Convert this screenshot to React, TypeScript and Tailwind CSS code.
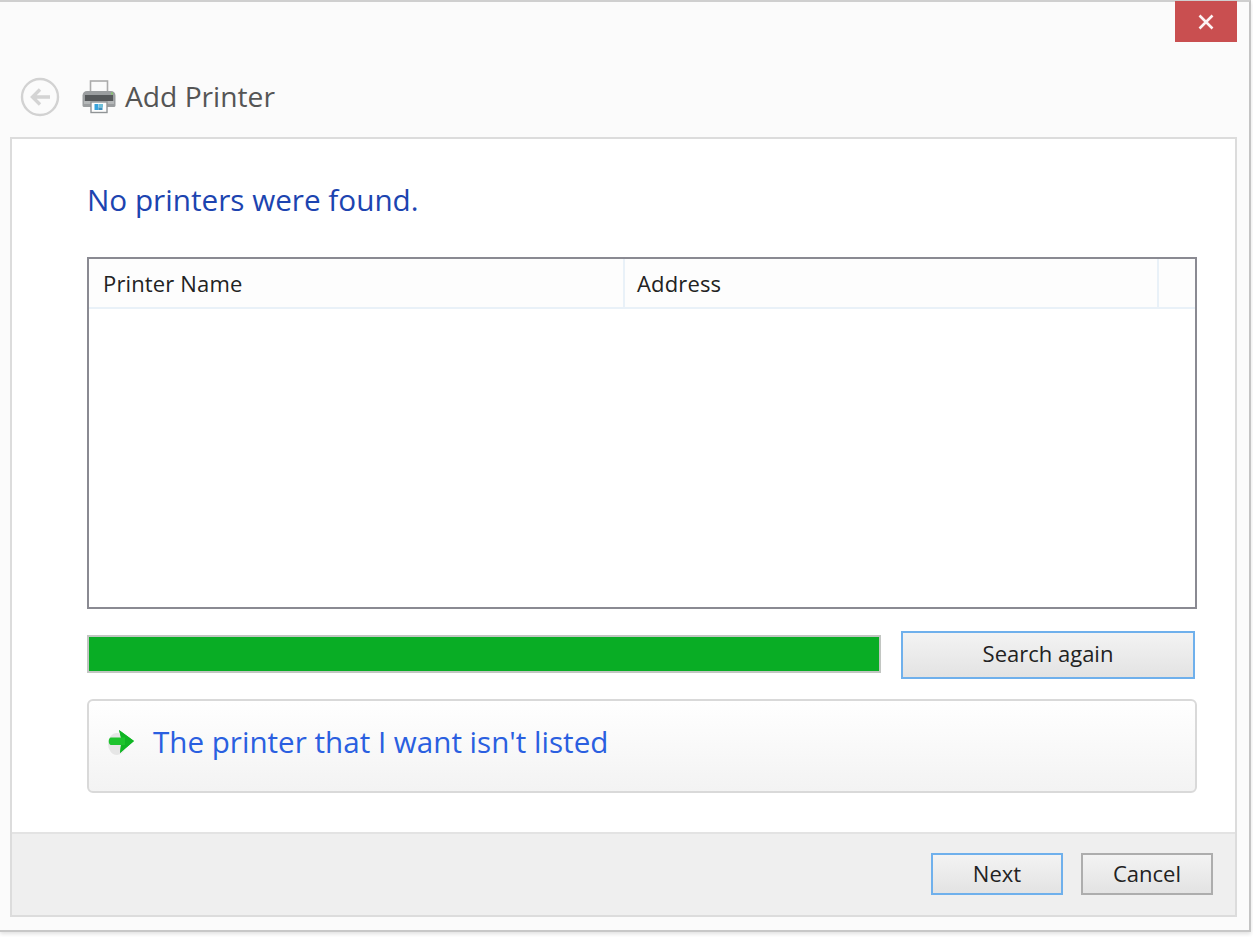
import React from 'react';

const FONT = "font-['Open_Sans','Noto_Sans',sans-serif]";

const BackIcon = () => (
  <svg width="40" height="40" viewBox="0 0 40 40" fill="none">
    <circle cx="20" cy="20" r="18" stroke="#d2d2d2" strokeWidth="2.4" fill="#fbfbfb" />
    <path d="M30 20H13M20 12.5L12.5 20L20 27.5" stroke="#d4d4d4" strokeWidth="3.4" />
  </svg>
);

const PrinterIcon = () => (
  <svg width="34" height="34" viewBox="0 0 34 34">
    <rect x="8.5" y="1" width="17" height="12" fill="#fafafa" stroke="#ababab" strokeWidth="1.6" />
    <path d="M5 11H29C31.5 11 33.5 13 33.5 15.5V25.5C33.5 26.5 32.5 27 31.5 27H2.5C1.5 27 0.5 26.5 0.5 25.5V15.5C0.5 13 2.5 11 5 11Z" fill="#9a9d9f" />
    <rect x="3" y="15" width="28" height="6" fill="#55585a" />
    <rect x="2" y="21" width="30" height="3" fill="#b4b7b8" />
    <rect x="29" y="12.5" width="2" height="2" fill="#86c46e" />
    <rect x="9" y="22" width="16" height="10.5" fill="#fdfdfd" stroke="#909496" strokeWidth="1.4" />
    <rect x="12.5" y="24" width="4" height="6" fill="#38a3dc" />
    <rect x="17" y="24" width="4" height="3.5" fill="#6fc0d8" />
    <rect x="16.5" y="27.5" width="4" height="2.5" fill="#3f8fbe" />
  </svg>
);

const CloseIcon = () => (
  <svg width="16" height="16" viewBox="0 0 16 16" fill="none">
    <path d="M1.5 1.5L14.5 14.5M14.5 1.5L1.5 14.5" stroke="#fdf3f3" strokeWidth="2.6" />
  </svg>
);

const ArrowIcon = () => (
  <svg width="30" height="32" viewBox="0 0 30 32">
    <ellipse cx="11" cy="18" rx="9" ry="11" fill="#e6e6e6" />
    <path d="M5 11.5H15L13 4L28 15L14 27L15 19H5C2 19 2 11.5 5 11.5Z" fill="#1ec42e" />
    <path d="M15 11.5L13 4L28 15L14 27L15 19H19V11.5Z" fill="#10b524" />
  </svg>
);

const DialogButton: React.FC<{ label: string; focused?: boolean; className: string }> = ({ label, focused, className }) => (
  <button
    className={`${className} border-2 text-[22px] text-[#222] bg-gradient-to-b from-[#f3f3f3] to-[#e3e3e3] ${
      focused ? 'border-[#6fb0ec]' : 'border-[#adadad]'
    }`}
  >
    {label}
  </button>
);

export default function App() {
  return (
    <div className={`${FONT} w-[1253px] h-[937px] bg-white overflow-hidden`}>
      <div className="w-[1251px] h-[932px] flex flex-col bg-[#fbfbfb] border-t-2 border-r-2 border-b-2 border-t-[#cfcfcf] border-r-[#c4c4c4] border-b-[#c8c8c8] shadow-[0_2px_4px_rgba(0,0,0,0.12)]">
        <div className="h-[135px] shrink-0 relative flex items-center pl-[20px] pt-[55px]">
          <div className="absolute right-[12px] top-[-1px] w-[62px] h-[41px] bg-[#c94f50] flex items-center justify-center">
            <CloseIcon />
          </div>
          <BackIcon />
          <div className="ml-[22px]">
            <PrinterIcon />
          </div>
          <span className="ml-[9px] mb-[2px] text-[28.2px] text-[#555] leading-none">Add Printer</span>
        </div>

        <div className="ml-[10px] w-[1227px] h-[780px] shrink-0 flex flex-col border-2 border-[#dcdcdc] bg-white">
          <div className="flex-1 flex flex-col pl-[75px] pr-[38px]">
            <h1 className="mt-[40px] h-[42px] text-[29.7px] leading-[42px] text-[#1c44b0]">No printers were found.</h1>

            <div className="mt-[36px] h-[352px] border-2 border-[#8a8a92] bg-white">
              <div className="h-[50px] flex border-b-2 border-[#e9f1f8] bg-[#fdfdfd] text-[22px] tracking-[0.15px] text-[#222]">
                <div className="w-[536px] pl-[14px] flex items-center border-r-2 border-[#e9f1f8]">Printer Name</div>
                <div className="w-[534px] pl-[12px] flex items-center border-r-2 border-[#e9f1f8]">Address</div>
              </div>
            </div>

            <div className="mt-[22px] h-[48px] flex items-center">
              <div className="w-[794px] h-[38px] mb-[2px] bg-[#09ad25] border-2 border-[#c2c6c2]" />
              <DialogButton label="Search again" focused className="ml-[20px] w-[294px] h-[48px] pb-[3px]" />
            </div>

            <div className="mt-[20px] h-[94px] flex items-center pl-[17px] pb-[8px] rounded-[6px] border-2 border-[#d9d9d9] bg-gradient-to-b from-white to-[#f3f3f3]">
              <ArrowIcon />
              <span className="ml-[17px] text-[29.6px] text-[#2a5fe0]">The printer that I want isn't listed</span>
            </div>
          </div>

          <div className="h-[83px] shrink-0 flex items-center justify-end pr-[22px] pb-[2px] bg-[#efefef] border-t-2 border-[#e3e3e3]">
            <DialogButton label="Next" focused className="w-[132px] h-[42px]" />
            <DialogButton label="Cancel" className="ml-[18px] w-[132px] h-[42px]" />
          </div>
        </div>
      </div>
    </div>
  );
}
